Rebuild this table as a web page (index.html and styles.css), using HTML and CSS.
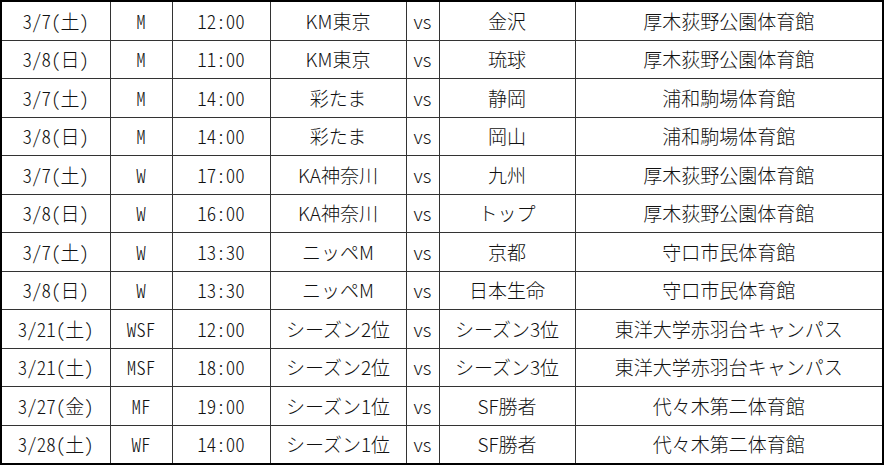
FILE: index.html
```html
<!DOCTYPE html>
<html lang="ja">
<head>
<meta charset="utf-8">
<link rel="stylesheet" href="styles.css">
</head>
<body>
<table class="sched">
<colgroup>
<col class="c-date"><col class="c-cat"><col class="c-time"><col class="c-team"><col class="c-vs"><col class="c-team"><col class="c-venue">
</colgroup>
<tbody>
<tr><td class="mono">3/7(土)</td><td class="mono">M</td><td class="mono">12:00</td><td>KM東京</td><td>vs</td><td>金沢</td><td>厚木荻野公園体育館</td></tr>
<tr><td class="mono">3/8(日)</td><td class="mono">M</td><td class="mono">11:00</td><td>KM東京</td><td>vs</td><td>琉球</td><td>厚木荻野公園体育館</td></tr>
<tr><td class="mono">3/7(土)</td><td class="mono">M</td><td class="mono">14:00</td><td>彩たま</td><td>vs</td><td>静岡</td><td>浦和駒場体育館</td></tr>
<tr><td class="mono">3/8(日)</td><td class="mono">M</td><td class="mono">14:00</td><td>彩たま</td><td>vs</td><td>岡山</td><td>浦和駒場体育館</td></tr>
<tr><td class="mono">3/7(土)</td><td class="mono">W</td><td class="mono">17:00</td><td>KA神奈川</td><td>vs</td><td>九州</td><td>厚木荻野公園体育館</td></tr>
<tr><td class="mono">3/8(日)</td><td class="mono">W</td><td class="mono">16:00</td><td>KA神奈川</td><td>vs</td><td>トップ</td><td>厚木荻野公園体育館</td></tr>
<tr><td class="mono">3/7(土)</td><td class="mono">W</td><td class="mono">13:30</td><td>ニッペM</td><td>vs</td><td>京都</td><td>守口市民体育館</td></tr>
<tr><td class="mono">3/8(日)</td><td class="mono">W</td><td class="mono">13:30</td><td>ニッペM</td><td>vs</td><td>日本生命</td><td>守口市民体育館</td></tr>
<tr><td class="mono">3/21(土)</td><td class="mono">WSF</td><td class="mono">12:00</td><td>シーズン2位</td><td>vs</td><td>シーズン3位</td><td>東洋大学赤羽台キャンパス</td></tr>
<tr><td class="mono">3/21(土)</td><td class="mono">MSF</td><td class="mono">18:00</td><td>シーズン2位</td><td>vs</td><td>シーズン3位</td><td>東洋大学赤羽台キャンパス</td></tr>
<tr><td class="mono">3/27(金)</td><td class="mono">MF</td><td class="mono">19:00</td><td>シーズン1位</td><td>vs</td><td>SF勝者</td><td>代々木第二体育館</td></tr>
<tr><td class="mono">3/28(土)</td><td class="mono">WF</td><td class="mono">14:00</td><td>シーズン1位</td><td>vs</td><td>SF勝者</td><td>代々木第二体育館</td></tr>
</tbody>
</table>
</body>
</html>
```
FILE: styles.css
```css
html, body {
  margin: 0;
  padding: 0;
  background: #fff;
}
.sched {
  border-collapse: collapse;
  table-layout: fixed;
  width: 884px;
  border: 2px solid #000;
  font-family: "Noto Sans CJK JP", "Noto Sans", sans-serif;
  font-size: 19px;
  font-weight: 300;
  color: #111;
}
.c-date { width: 109px; }
.c-cat { width: 62px; }
.c-time { width: 98px; }
.c-team { width: 136px; }
.c-vs { width: 33px; }
.c-venue { width: 308px; }
.sched td {
  border: 1px solid #333;
  height: 37.5px;
  padding: 0;
  text-align: center;
  vertical-align: middle;
  line-height: 20px;
  white-space: nowrap;
}
.sched td.mono {
  font-feature-settings: "hwid" 1;
}
```
